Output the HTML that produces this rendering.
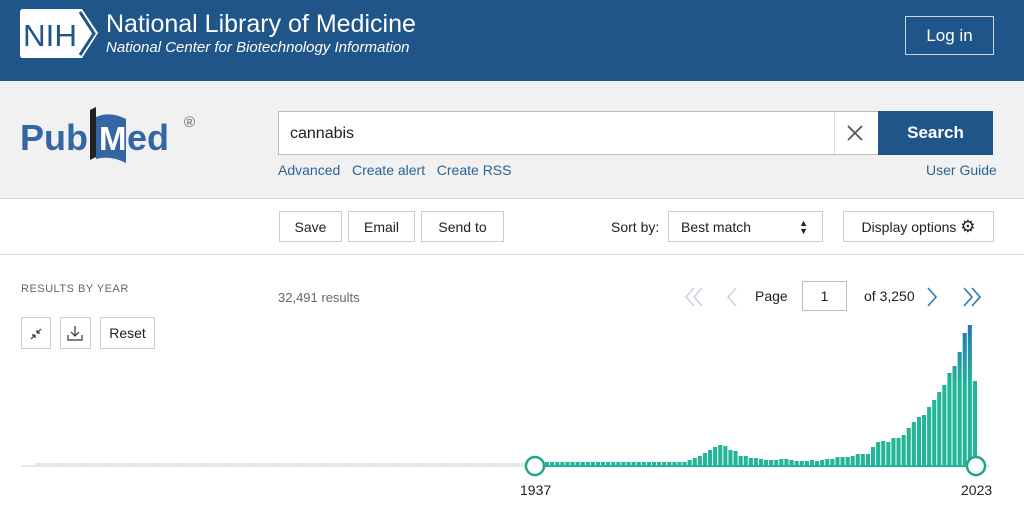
<!DOCTYPE html>
<html><head><meta charset="utf-8"><style>
*{box-sizing:border-box;margin:0;padding:0}
body{width:1024px;height:525px;overflow:hidden;background:#fff;font-family:"Liberation Sans",sans-serif;position:relative;color:#212121}
.a{position:absolute}
.btn{position:absolute;border:1px solid #ccc;background:#fff;font-size:14px;color:#212121;display:flex;align-items:center;justify-content:center;height:31px;top:211px}
a{color:#2a6496;text-decoration:none}
</style></head><body>
<div class="a" style="left:0;top:0;width:1024px;height:81px;background:#20558a"></div>
<svg class="a" style="left:20px;top:9px" width="80" height="50" viewBox="0 0 80 50">
<path d="M3 0H62L78 24L62 49H3Q0 49 0 46V3Q0 0 3 0Z" fill="#fff"/>
<path d="M60 3L74 24.5L60 46" stroke="#20558a" stroke-width="3" fill="none"/>
<text x="3" y="37" font-family="Liberation Sans" font-size="31" textLength="54" lengthAdjust="spacingAndGlyphs" fill="#20558a">NIH</text>
</svg>
<div class="a" style="left:106px;top:10px;color:#fff;font-size:25px">National Library of Medicine</div>
<div class="a" style="left:106px;top:39px;color:#fff;font-size:15px;font-style:italic">National Center for Biotechnology Information</div>
<div class="a" style="left:905px;top:16px;width:89px;height:39px;border:1px solid #c8d6e5;color:#fff;font-size:17px;display:flex;align-items:center;justify-content:center">Log in</div>
<div class="a" style="left:0;top:81px;width:1024px;height:118px;background:#f1f1f1;border-bottom:1px solid #d8d8d8"></div>
<div class="a" style="left:20px;top:117px;font-size:36px;font-weight:bold;color:#3466a5">Pub</div>
<svg class="a" style="left:86px;top:105px" width="100" height="62" viewBox="0 0 100 62">
<path d="M4 5L10 2V52L4 55Z" fill="#222"/>
<path d="M10 12Q24 6 40 14V58Q24 50 10 54Z" fill="#3466a5"/>
<text x="13" y="45" font-family="Liberation Sans" font-weight="bold" font-size="33" fill="#fff">M</text>
</svg>
<div class="a" style="left:127px;top:117px;font-size:36px;font-weight:bold;color:#3466a5">ed</div>
<div class="a" style="left:184px;top:114px;font-size:15px;color:#666">®</div>
<div class="a" style="left:278px;top:111px;width:601px;height:44px;background:#fff;border:1px solid #bbb"></div>
<div class="a" style="left:290px;top:125px;font-size:16px">cannabis</div>
<div class="a" style="left:834px;top:112px;width:1px;height:42px;background:#ddd"></div>
<svg class="a" style="left:846px;top:124px" width="18" height="18"><path d="M2 2L16 16M16 2L2 16" stroke="#555" stroke-width="1.8"/></svg>
<div class="a" style="left:878px;top:111px;width:115px;height:44px;background:#20558a;color:#fff;font-size:17px;font-weight:bold;display:flex;align-items:center;justify-content:center">Search</div>
<div class="a" style="left:278px;top:162px;font-size:14px"><a>Advanced</a>&nbsp;&nbsp;&nbsp;<a>Create alert</a>&nbsp;&nbsp;&nbsp;<a>Create RSS</a></div>
<div class="a" style="left:926px;top:162px;font-size:14px"><a>User Guide</a></div>
<div class="btn" style="left:279px;width:63px">Save</div>
<div class="btn" style="left:348px;width:67px">Email</div>
<div class="btn" style="left:421px;width:83px">Send to</div>
<div class="a" style="left:611px;top:219px;font-size:14px">Sort by:</div>
<div class="btn" style="left:668px;width:155px;justify-content:flex-start;padding-left:12px">Best match<span style="position:absolute;right:14px;font-size:9px;line-height:8px;text-align:center">▲<br>▼</span></div>
<div class="btn" style="left:843px;width:151px">Display options&nbsp;<span style="font-size:17px">⚙</span></div>
<div class="a" style="left:0;top:254px;width:1024px;height:1px;background:#d8d8d8"></div>
<div class="a" style="left:21px;top:283px;font-size:11px;color:#666;letter-spacing:.5px">RESULTS BY YEAR</div>
<div class="a" style="left:278px;top:290px;font-size:13px;color:#666">32,491 results</div>
<div class="a" style="left:21px;top:317px;width:30px;height:32px;border:1px solid #ccc"></div>
<svg class="a" style="left:28px;top:326px" width="16" height="16"><path d="M3 13L7 9M7 9V12M7 9H4M13 3L9 7M9 7V4M9 7H12" stroke="#333" stroke-width="1.2" fill="none"/></svg>
<div class="a" style="left:60px;top:317px;width:31px;height:32px;border:1px solid #ccc"></div>
<svg class="a" style="left:66px;top:324px" width="18" height="18"><path d="M9 2V12M5 8L9 12L13 8M2 11V16H16V11" stroke="#333" stroke-width="1.2" fill="none"/></svg>
<div class="a" style="left:100px;top:317px;width:55px;height:32px;border:1px solid #ccc;font-size:14px;display:flex;align-items:center;justify-content:center">Reset</div>
<svg class="a" style="left:684px;top:285px" width="300" height="24">
<path d="M10 3L2 12L10 21M18 3L10 12L18 21" stroke="#ccd" stroke-width="1.4" fill="none"/>
<path d="M52 3L44 12L52 21" stroke="#ccd" stroke-width="1.4" fill="none"/>
<path d="M244 3L252 12L244 21" stroke="#2a7ab7" stroke-width="1.6" fill="none"/>
<path d="M280 3L288 12L280 21M288 3L296 12L288 21" stroke="#2a7ab7" stroke-width="1.6" fill="none"/>
</svg>
<div class="a" style="left:755px;top:288px;font-size:14px">Page</div>
<div class="a" style="left:802px;top:281px;width:45px;height:30px;border:1px solid #bbb;font-size:14px;display:flex;align-items:center;justify-content:center">1</div>
<div class="a" style="left:864px;top:288px;font-size:14px">of 3,250</div>
<svg class="a" id="ch" style="left:0;top:300px" width="1024" height="225"></svg>
<div class="a" style="left:520px;top:482px;font-size:14px">1937</div>
<div class="a" style="left:961px;top:482px;font-size:14px">2023</div>
<script>
var h=[];for(var i=0;i<28;i++)h.push(3);
h=h.concat([5,7,9,12,15,18,20,19,15,14,9,9,7,7,6,5,5,5,6,6,5,4,4,4,5,4,5,6,6,8,8,8,9,11,11,11,18,23,24,23,27,27,30,37,43,48,50,58,65,73,80,92,99,113,132,140,84]);
var s='<defs><linearGradient id="g" gradientUnits="userSpaceOnUse" x1="0" y1="165" x2="0" y2="20"><stop offset="0.55" stop-color="#22b597"/><stop offset="1" stop-color="#2571b8"/></linearGradient></defs>';
s+='<line x1="22" y1="166" x2="990" y2="166" stroke="#ccc" stroke-width="1"/>';
for(var k=0;k<165;k++){s+='<rect x="'+(35+k*3)+'" y="163" width="2" height="2" fill="#ddd"/>';}
var bw=433/h.length;
for(var j=0;j<h.length;j++){var x=545+j*bw;s+='<rect x="'+x.toFixed(1)+'" y="'+(165-h[j])+'" width="'+(bw-1).toFixed(1)+'" height="'+h[j]+'" fill="url(#g)"/>';}
s+='<line x1="535" y1="166" x2="976" y2="166" stroke="#22b597" stroke-width="2"/>';
s+='<circle cx="535" cy="166" r="9" fill="#fff" stroke="#22a58a" stroke-width="2.5"/><circle cx="976" cy="166" r="9" fill="#fff" stroke="#22a58a" stroke-width="2.5"/>';
document.getElementById('ch').innerHTML=s;
</script>
</body></html>
